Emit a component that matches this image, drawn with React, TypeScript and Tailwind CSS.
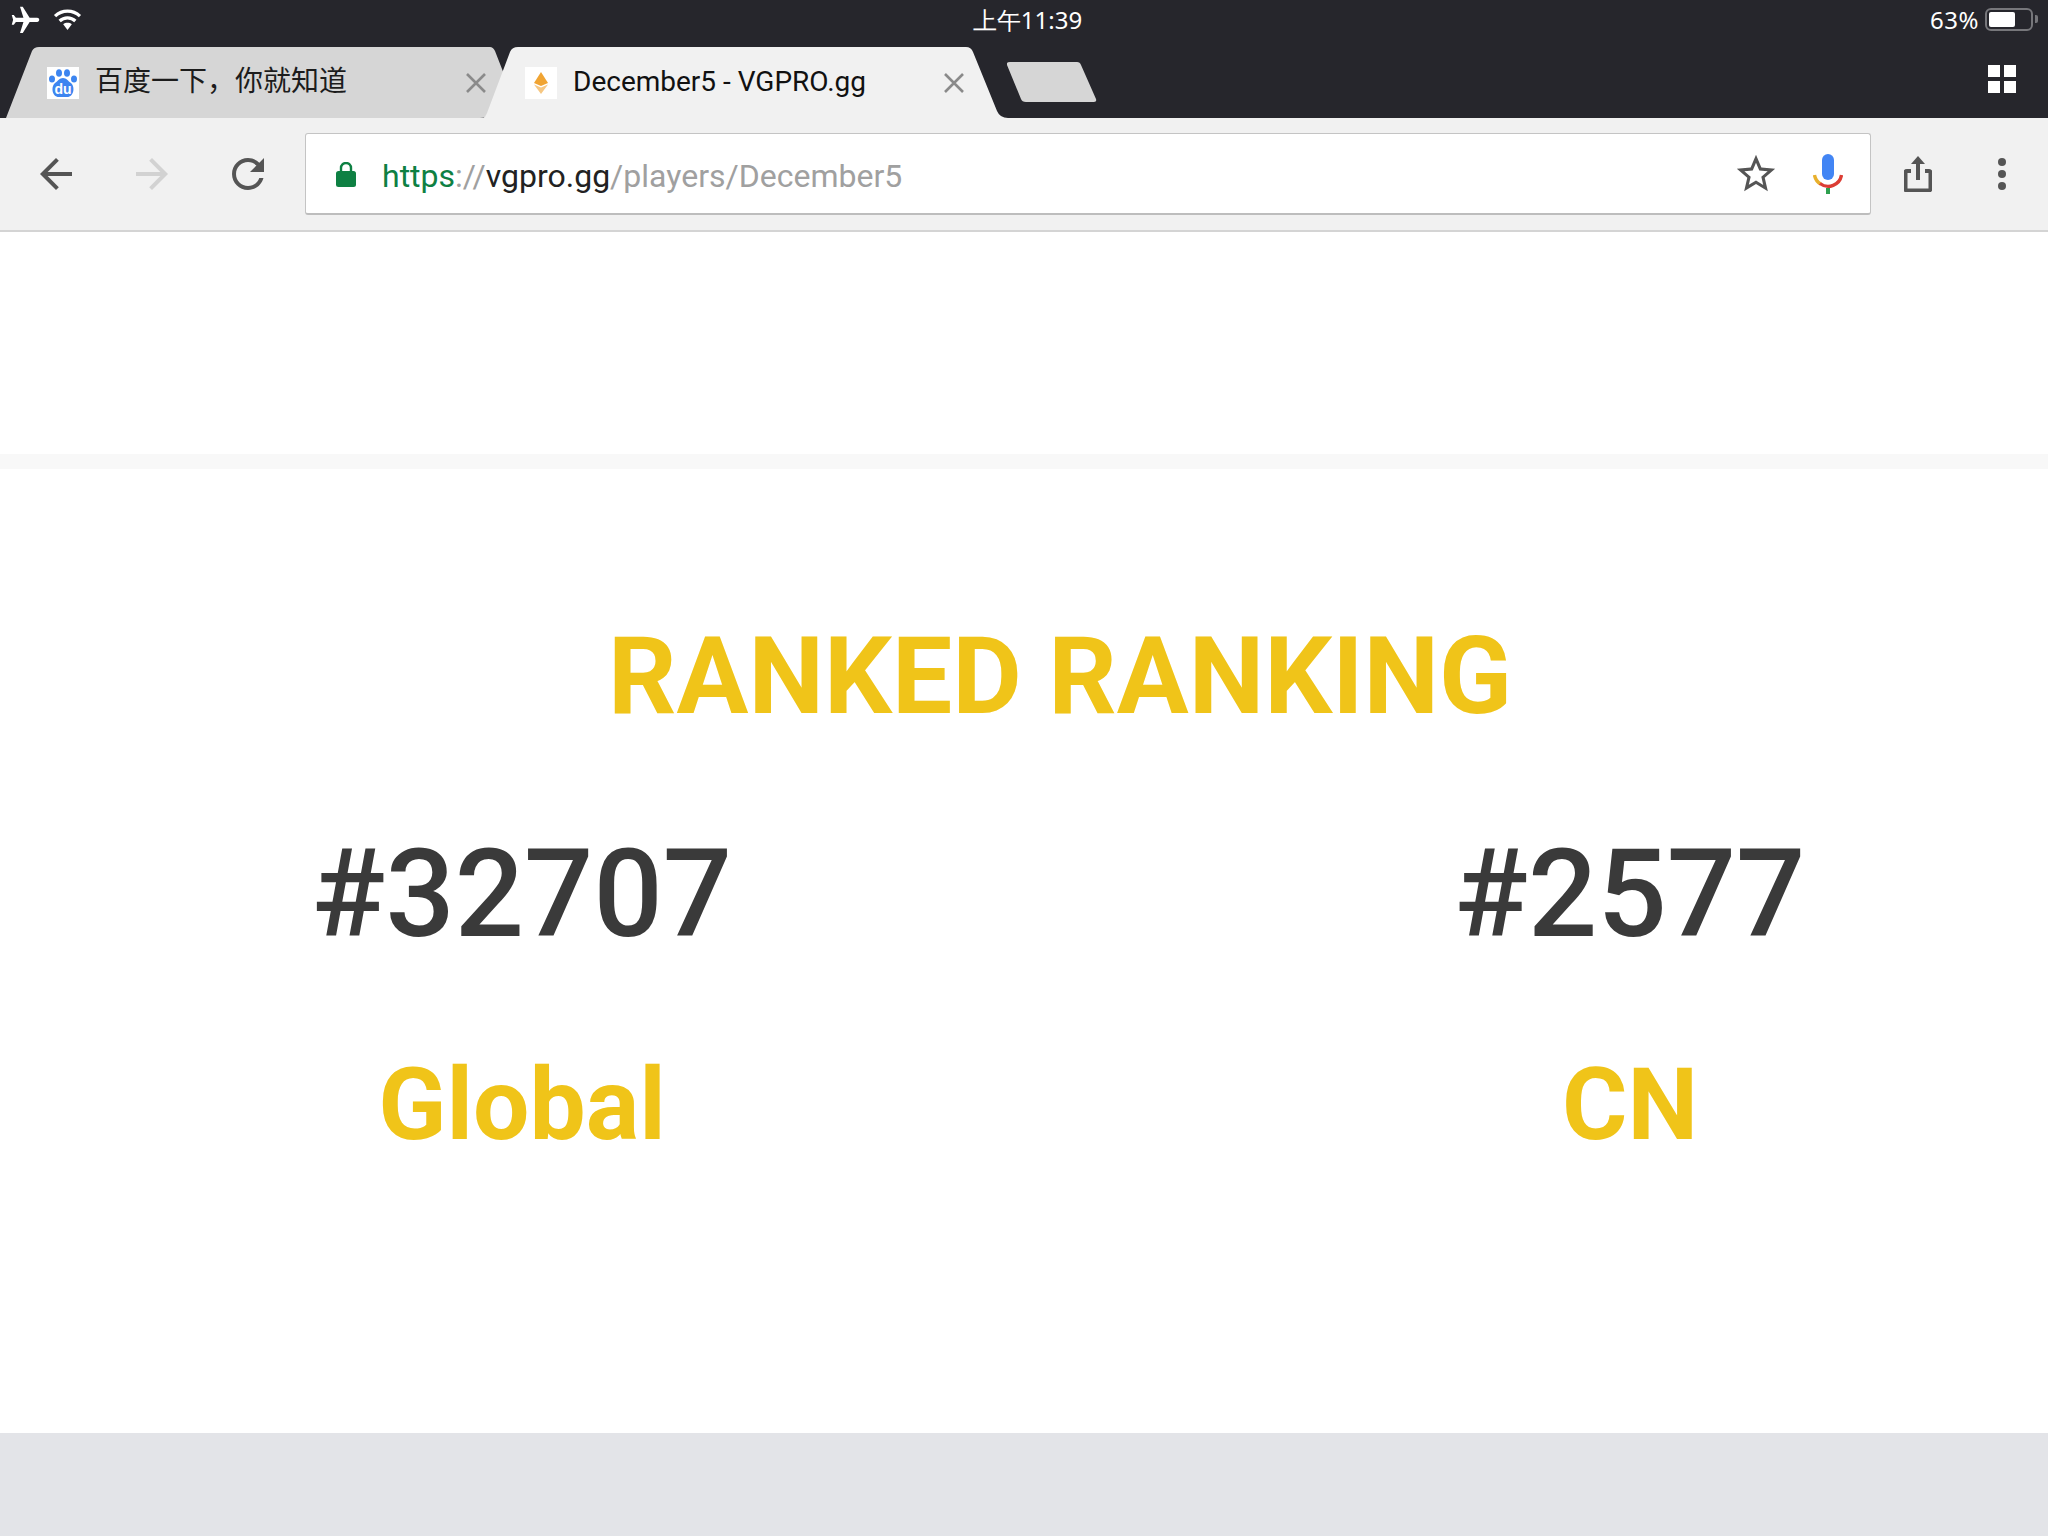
import React from 'react';

const roboto = "font-['Roboto','Noto_Sans_CJK_SC',sans-serif]";

const CloseX = () => (
  <svg viewBox="0 0 20 20" className="w-[20px] h-[20px] shrink-0" stroke="#8a8a8a" strokeWidth="2.6">
    <path d="M1 1l18 18M19 1L1 19" />
  </svg>
);

const MaterialIcon = ({ d, className, fill = '#555555' }: { d: string; className: string; fill?: string }) => (
  <svg viewBox="0 0 24 24" className={className} fill={fill}>
    <path d={d} />
  </svg>
);

const StatusBar = () => (
  <div className="grid grid-cols-3 items-start h-[47px] pl-[9px] pr-[10px] pt-[8px] text-white text-[24px]">
    <div className="flex items-center gap-[11px] -mt-[4px]">
      <svg viewBox="0 0 24 24" className="w-[33px] h-[33px] rotate-90" fill="#ffffff">
        <path d="M21 16v-2l-8-5V3.5c0-.83-.67-1.5-1.5-1.5S10 2.67 10 3.5V9l-8 5v2l8-2.5V19l-2 1.5V22l3.5-1 3.5 1v-1.5L13 19v-5.5l8 2.5z" />
      </svg>
      <svg viewBox="0 0 30 24" className="w-[29px] h-[23px] mb-[3px]" fill="none" stroke="#ffffff" strokeWidth="3.4">
        <path d="M2 8.5c7.5-7 18.5-7 26 0M6.8 13.5c4.7-4.4 11.7-4.4 16.4 0" />
        <path d="M10.5 17c2.6-2 6.4-2 9 0L15 23z" fill="#ffffff" stroke="none" />
      </svg>
    </div>
    <div className="text-center leading-none pl-[8px]">上午11:39</div>
    <div className="flex items-start justify-end gap-[6px] leading-none">
      <span className="tracking-[0.5px]">63%</span>
      <div className="w-[48px] h-[23px] rounded-[6px] border-2 border-[#77777b] p-[2px]">
        <div className="w-[64%] h-full bg-white rounded-[2px]"></div>
      </div>
      <div className="w-[3px] h-[8px] mt-[7px] bg-[#77777b] rounded-r-[2px] -ml-[4px]"></div>
    </div>
  </div>
);

const TabStrip = () => (
  <div className="flex items-start h-[71px] relative">
    {/* inactive tab */}
    <div className="relative w-[504px] h-[71px] shrink-0 ml-[6px] flex items-center pl-[41px]">
      <svg viewBox="0 0 504 71" className="absolute inset-0 w-full h-full">
        <path d="M0 71 L26 4 Q28 0 33 0 L484 0 Q487 0 489 4 L503 40 L483 66 Q480 71 474 71 Z" fill="#d6d6d6" />
      </svg>
      <div className="relative flex items-center w-full">
        <div className="w-[32px] h-[32px] bg-white shrink-0 relative">
          <svg viewBox="0 0 32 32" className="w-[32px] h-[32px]" fill="#3d85f0">
            <ellipse cx="5" cy="12" rx="3" ry="3.6" />
            <ellipse cx="12" cy="6" rx="3" ry="3.8" />
            <ellipse cx="20" cy="6" rx="3" ry="3.8" />
            <ellipse cx="27" cy="12" rx="3" ry="3.6" />
            <path d="M16 11c3.5 0 5 3 8 5 4 3 3.5 14-4 14h-8c-7.5 0-8-11-4-14 3-2 4.5-5 8-5z" />
          </svg>
          <span className="absolute left-0 right-0 top-[15px] text-center text-[14px] leading-none font-bold font-['Liberation_Sans',sans-serif] text-white">du</span>
        </div>
        <span className={`${roboto} ml-[16px] w-[250px] -mt-[1px] text-[28px] leading-none text-[#1c1c1c] whitespace-nowrap`}>百度一下，你就知道</span>
        <div className="ml-[121px]"><CloseX /></div>
      </div>
    </div>
    {/* active tab */}
    <div className="relative w-[526px] h-[71px] shrink-0 -ml-[28px] flex items-center pl-[43px]">
      <svg viewBox="0 0 526 71" className="absolute inset-0 w-full h-full">
        <path d="M0 71 Q3 71 5 66 L28 5 Q30 0 36 0 L484 0 Q489 0 491 5 L515 64 Q518 71 526 71 Z" fill="#f1f1f1" />
      </svg>
      <div className="relative flex items-center w-full">
        <div className="w-[32px] h-[32px] bg-white shrink-0 flex items-center justify-center">
          <svg viewBox="0 0 32 32" className="w-[32px] h-[32px]">
            <path d="M16 5 L23 16 L16 19 L9 16 Z" fill="#f0a433" />
            <path d="M9 17.5 L16 20.5 L23 17.5 L16 27 Z" fill="#f6c782" />
          </svg>
        </div>
        <span className={`${roboto} ml-[16px] w-[292px] -mt-[1px] text-[28px] leading-none text-[#111111] whitespace-nowrap`}>December5 - VGPRO.gg</span>
        <div className="ml-[79px]"><CloseX /></div>
      </div>
    </div>
    {/* new tab button */}
    <svg viewBox="0 0 90 41" className="w-[90px] h-[41px] mt-[15px] -ml-[1px] shrink-0">
      <path d="M0 3 Q-1 0 3 0 L70 0 Q73 0 74 3 L89 37 Q90 40 87 40 L19 40 Q15 40 14 37 Z" fill="#d6d6d6" />
    </svg>
    <div className="ml-auto mr-[32px] mt-[18px] grid grid-cols-2 gap-[4px] w-[28px] h-[28px]">
      <div className="bg-white"></div>
      <div className="bg-white"></div>
      <div className="bg-white"></div>
      <div className="bg-white"></div>
    </div>
  </div>
);

const Toolbar = () => (
  <div className="flex items-center h-[114px] bg-[#f1f1f1] border-b-2 border-[#d4d4d4]">
    <MaterialIcon className="w-[48px] h-[48px] ml-[32px]" d="M20 11H7.83l5.59-5.59L12 4l-8 8 8 8 1.41-1.41L7.83 13H20v-2z" />
    <MaterialIcon className="w-[48px] h-[48px] ml-[48px]" fill="#d2d2d2" d="M12 4l-1.41 1.41L16.17 11H4v2h12.17l-5.58 5.59L12 20l8-8z" />
    <MaterialIcon className="w-[48px] h-[48px] ml-[48px]" d="M17.65 6.35C16.2 4.9 14.21 4 12 4c-4.42 0-7.99 3.58-7.99 8s3.57 8 7.99 8c3.73 0 6.84-2.55 7.73-6h-2.08c-.82 2.33-3.04 4-5.65 4-3.31 0-6-2.69-6-6s2.69-6 6-6c1.66 0 3.14.69 4.22 1.78L13 11h7V4l-2.35 2.35z" />
    {/* omnibox */}
    <div className="flex items-center w-[1566px] h-[82px] ml-[33px] bg-white border border-[#c4c4c4] border-b-2 border-b-[#bdbdbd] rounded-[3px]">
      <svg viewBox="0 0 20 25" className="w-[20px] h-[25px] ml-[30px] mt-[2px] shrink-0" fill="#0e8043">
        <path d="M5 10V6a5 5 0 0 1 10 0v4" fill="none" stroke="#0e8043" strokeWidth="2.4" />
        <rect x="0" y="9" width="20" height="16" rx="2.5" />
      </svg>
      <span className={`${roboto} ml-[26px] pt-[4px] text-[32px] leading-none whitespace-nowrap`}>
        <span className="text-[#0e8043]">https</span>
        <span className="text-[#a0a0a0]">://</span>
        <span className="text-[#222222]">vgpro.gg</span>
        <span className="text-[#a0a0a0]">/players/December5</span>
      </span>
      <MaterialIcon className="w-[46px] h-[46px] ml-auto" d="M22 9.24l-7.19-.62L12 2 9.19 8.63 2 9.24l5.46 4.73L5.82 21 12 17.27 18.18 21l-1.63-7.03L22 9.24zM12 15.4l-3.76 2.27 1-4.28-3.32-2.88 4.38-.38L12 6.1l1.71 4.04 4.38.38-3.32 2.88 1 4.28L12 15.4z" />
      <svg viewBox="0 0 30 40" className="w-[30px] h-[40px] ml-[34px] mr-[27px] shrink-0" fill="none">
        <rect x="9" y="0" width="12" height="26" rx="6" fill="#4285f4" />
        <path d="M1.5 21a13.5 13.5 0 0 0 6 9" stroke="#e8b02c" strokeWidth="3.4" />
        <path d="M7 29.5a13.5 13.5 0 0 0 21.5-8.5" stroke="#dc3d34" strokeWidth="3.4" />
        <rect x="13" y="34" width="4" height="6" fill="#2fa04f" />
      </svg>
    </div>
    {/* share */}
    <svg viewBox="0 0 28 37" className="w-[28px] h-[37px] ml-[33px] -mt-[2px] shrink-0" fill="none" stroke="#555555" strokeWidth="4">
      <path d="M7 16H3a1.5 1.5 0 0 0-1.5 1.5V34A1.5 1.5 0 0 0 3 35.5h22a1.5 1.5 0 0 0 1.5-1.5V17.5A1.5 1.5 0 0 0 25 16h-4" />
      <path d="M14 25V4" />
      <path d="M7 9l7-8 7 8z" fill="#555555" stroke="none" />
    </svg>
    <div className="flex flex-col gap-[4px] ml-[66px]">
      <div className="w-[8px] h-[8px] rounded-full bg-[#555555]"></div>
      <div className="w-[8px] h-[8px] rounded-full bg-[#555555]"></div>
      <div className="w-[8px] h-[8px] rounded-full bg-[#555555]"></div>
    </div>
  </div>
);

const RankColumn = ({ rank, label }: { rank: string; label: string }) => (
  <div className={`${roboto} w-[500px] flex flex-col items-center`}>
    <div className="text-[122px] leading-[145px] font-medium text-[#3a3a3a]">{rank}</div>
    <div className="mt-[79px] text-[100px] leading-[117px] font-bold text-[#f0c419]">{label}</div>
  </div>
);

export default function App() {
  return (
    <div className="w-[2048px] h-[1536px] flex flex-col bg-white overflow-hidden">
      <div className="bg-[#26262c]">
        <StatusBar />
        <TabStrip />
      </div>
      <Toolbar />
      <div className="h-[222px]"></div>
      <div className="h-[15px] bg-[#f8f8f8]"></div>
      <div className="h-[964px] pt-[145px] flex flex-col">
        <h1 className={`${roboto} ml-[608px] text-[107px] leading-[126px] font-bold text-[#f0c419] whitespace-nowrap`}>RANKED RANKING</h1>
        <div className="flex mt-[82px] ml-[272px] gap-[608px]">
          <RankColumn rank="#32707" label="Global" />
          <RankColumn rank="#2577" label="CN" />
        </div>
      </div>
      <div className="flex-1 bg-[#e3e4e8]"></div>
    </div>
  );
}
